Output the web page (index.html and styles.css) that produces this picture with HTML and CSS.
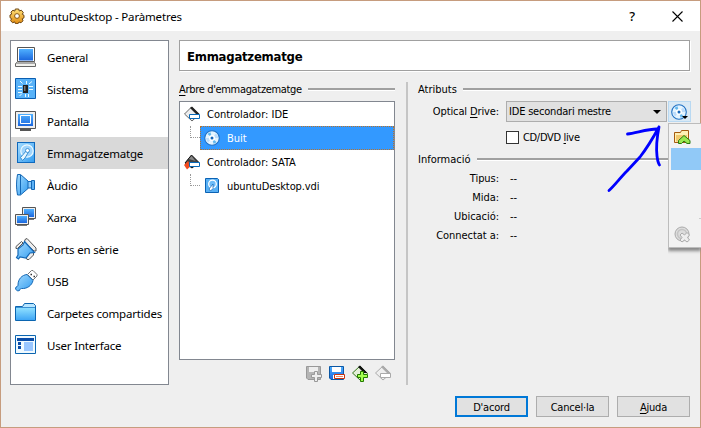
FILE: index.html
```html
<!DOCTYPE html>
<html lang="ca">
<head>
<meta charset="utf-8">
<title>ubuntuDesktop - Paràmetres</title>
<link rel="stylesheet" href="styles.css">
</head>
<body>
<svg class="defs" width="0" height="0" aria-hidden="true">
  <defs>
    <linearGradient id="blue" x1="0" y1="0" x2="0" y2="1"><stop offset="0" stop-color="#4fb0ff"/><stop offset="1" stop-color="#1b66dd"/></linearGradient>
    <linearGradient id="sky" x1="0" y1="0" x2="1" y2="1"><stop offset="0" stop-color="#a5dcff"/><stop offset="1" stop-color="#329cf0"/></linearGradient>
    <linearGradient id="folder" x1="0" y1="0" x2="0" y2="1"><stop offset="0" stop-color="#8fe0ff"/><stop offset="1" stop-color="#3fa6f5"/></linearGradient>
    <linearGradient id="gold" x1="0" y1="0" x2="0" y2="1"><stop offset="0" stop-color="#ffe27a"/><stop offset="1" stop-color="#e08a10"/></linearGradient>
    <symbol id="disc" viewBox="0 0 16 16">
      <circle cx="8" cy="8" r="7.300" fill="#e4f4ff" stroke="#1f70c4" stroke-width="1.100"/>
      <path d="M8 8 3.500 4A6 6 0 0 1 6.500 2.200ZM8 8l4.500 4A6 6 0 0 1 9.500 13.800Z" fill="#62b8ee"/>
      <path d="M8 8 2 8A6 6 0 0 0 4 12.500ZM8 8l6 0A6 6 0 0 0 12 3.500Z" fill="#bcdcfb"/>
      <circle cx="8" cy="8" r="3" fill="#fff"/><circle cx="8" cy="8" r="1.500" fill="#1667ba"/>
    </symbol>
    <symbol id="disk" viewBox="0 0 20 22">
      <rect x="1.500" y=".5" width="17" height="20" fill="url(#sky)" stroke="#0f69bd"/>
      <circle cx="11" cy="9" r="6.200" fill="#9fd4fc" stroke="#eefaff" stroke-width="1.200"/>
      <path d="m11 8-6.500 7.500 2 3L9 16l3.500-6Z" fill="#e7f7ff" stroke="#2a84cd" stroke-width=".9"/>
      <circle cx="11.500" cy="8.500" r="2" fill="#fff" stroke="#2a84cd" stroke-width=".8"/>
    </symbol>
  </defs>
</svg>
<div class="window">
  <header class="titlebar">
    <svg class="gear" width="16" height="16" viewBox="0 0 16 16"><path d="M6.300 1h3.400l.6 2 2-.8 2 2.300-1 1.800 1.700 1v2.500l-1.800 1 .8 2-2 2-2-.8-1 1.700H6.500l-.9-1.800-2 .9-2-2.100 1-2L1 9.700V7l1.700-.9-.8-2L4 2.200l1.800.9Z" fill="url(#gold)" stroke="#6b4310"/><circle cx="8" cy="8" r="2.400" fill="#fff" stroke="#875611"/></svg>
    <h1 class="title">ubuntuDesktop - Paràmetres</h1>
    <span class="help">?</span>
    <svg class="close" width="11" height="11" viewBox="0 0 11 11"><path d="m.5.5 10 10M10.500.5l-10 10" stroke="#000" stroke-width="1.100"/></svg>
  </header>
  <div class="content">
    <nav class="sidebar">
      <a class="item"><svg width="23" height="22" viewBox="0 0 23 22"><path d="M2.500 1.500h17v14h-17z" fill="#fff" stroke="#555"/><path d="M4 3h14v11.500H4z" fill="url(#blue)"/><path d="m2.500 16-2 1.500v3h20v-3l-2-1.500Z" fill="#f2f2ee" stroke="#666"/><path d="M1 17.500h19" stroke="#aaa"/></svg><span>General</span></a>
      <a class="item"><svg width="23" height="22" viewBox="0 0 23 22"><path d="M.5.5h20v20H.5z" fill="#58b2f8" stroke="#0b5eb1"/><path d="M8 7h5v8H8z" fill="#222"/><path d="M9 8h1.500v5H9z" fill="#777"/><path d="M3 8.500h4M3 11.500h4M3 14.500h4M14 8.500h4M14 11.500h4M11.500 3v3M5 3l2.500 2.500M17 3.500 14 6M4.500 18 7 15.500M10.500 16v3M13.500 16v3" stroke="#e9faff"/></svg><span>Sistema</span></a>
      <a class="item"><svg width="23" height="22" viewBox="0 0 23 22"><path d="M.5 1.500h20v17H.5z" fill="#eee" stroke="#555"/><path d="M3 4h15v12H3z" fill="url(#blue)"/><path d="M5.500 5.500h10v8h-10z" fill="none" stroke="#fff"/><path d="M5 19h11v2H5z" fill="#555"/></svg><span>Pantalla</span></a>
      <a class="item selected"><svg width="23" height="22"><use href="#disk" x="1" width="20" height="22"/></svg><span>Emmagatzematge</span></a>
      <a class="item"><svg width="23" height="22" viewBox="0 0 23 22"><path d="M11 7.500h6v6.500h-6z" fill="#8ccbfb" stroke="#1468b6"/><path d="M16.500 6.500h3v9h-3z" fill="#5db2f6" stroke="#1468b6"/><path d="M2.500.5h3L13 7v7.500l-7.500 6.500h-3C1.200 14 1.200 8 2.500.5Z" fill="url(#sky)" stroke="#1468b6"/><path d="M5.500 1v19.500" stroke="#1468b6"/></svg><span>Àudio</span></a>
      <a class="item"><svg width="23" height="22" viewBox="0 0 23 22"><path d="M7.500 1.500h13v11h-13z" fill="#eee" stroke="#555"/><path d="M9 3h10v8H9z" fill="url(#blue)"/><path d="M.5 8.500h13v10H.5z" fill="#eee" stroke="#555"/><path d="M2 10h10v7H2z" fill="url(#blue)"/><path d="M2 19.500h10M14 13.500h5" stroke="#777"/></svg><span>Xarxa</span></a>
      <a class="item"><svg width="23" height="22" viewBox="0 0 23 22"><path d="m10 1.500 2-1 9 9.500v3h-2L9.500 4ZM1 8.500 6.500 3.500 8 5l-5.500 5.500H1ZM11 19l5-5 2.500.5V17L14 21.500h-2Z" fill="#eee" stroke="#555"/><path d="m9.500 3.500 10 11-4.500.5-4 5-6-1-1.500 2-2-1.500L3 17 3 11l5-4Z" fill="url(#sky)" stroke="#1468b6" stroke-width="1.200"/></svg><span>Ports en sèrie</span></a>
      <a class="item"><svg width="23" height="22" viewBox="0 0 23 22"><path d="m12.500 4.500 4-4h1.500L22 4.500V6l-4 4Z" fill="#fff" stroke="#777"/><path d="M15.500 4.500H17M18.500 6.500H20" stroke="#333" stroke-width="1.500"/><path d="m12 4.500 6 6c-1 5-6 8.500-11.500 8-1 0-1.500.5-2 2l-2 .5L.5 19l.5-2c1.500-.5 2-1 2-2C3 9 7 5 12 4.500Z" fill="url(#sky)" stroke="#1468b6"/></svg><span>USB</span></a>
      <a class="item"><svg width="23" height="22" viewBox="0 0 23 22"><path d="M.5 4.500h7l2-3h9l2 2v15H.5Z" fill="#b8e6ff" stroke="#0b65b0"/><path d="M1 6h19v12H1z" fill="url(#folder)"/><path d="M1 5.500h19" stroke="#3b91d4"/></svg><span>Carpetes compartides</span></a>
      <a class="item"><svg width="23" height="22" viewBox="0 0 23 22"><path d="M.5 1.500h20v18H.5z" fill="#f0faff" stroke="#0b65b0"/><path d="M2 4h17v3H2zM3 8h3v3H3zM3 12h3v3H3z" fill="#0a4ca8"/><path d="M9 8h9v9H9z" fill="#99c6ff"/></svg><span>User Interface</span></a>
    </nav>
    <main class="page">
      <h2 class="heading"><span>Emmagatzematge</span></h2>
      <div class="columns">
        <section class="storage">
          <h3 class="legend"><span class="tight"><u>A</u>rbre d'emmagatzematge</span></h3>
          <div class="tree">
            <div class="row"><svg width="16" height="16" viewBox="0 0 16 16"><path d="M.5 8 7.500 1 15 8.500 8 15Z" fill="#eee" stroke="#666"/><path d="m6 2 2-1.500L15.500 8H12Z" fill="#222"/><path d="M5.500 8.500h10v4h-10z" fill="#fff" stroke="#0869b8"/></svg><span>Controlador: IDE</span></div>
            <div class="row child"><i class="branch"></i><div class="leaf active"><svg width="16" height="16"><use href="#disc"/></svg><span>Buit</span></div></div>
            <div class="row"><svg width="16" height="16" viewBox="0 0 16 16"><path d="M1 9 7.500 1 15 8.500 8 14Z" fill="#444" stroke="#111"/><path d="m5 5 2.500-3 4 5Z" fill="#888"/><path d="m0 11 4-4 3 5-4 3.500Z" fill="#f24c20"/><path d="M5.500 8.500h10v4h-10z" fill="#fff" stroke="#0869b8"/></svg><span>Controlador: SATA</span></div>
            <div class="row child"><i class="branch"></i><div class="leaf"><svg width="16" height="16" viewBox="0 0 16 16"><path d="M1.500.5h12l1 1v13h-13z" fill="#58b0f4" stroke="#0b62b4"/><circle cx="8.500" cy="6" r="3.800" fill="#6dbcf8" stroke="#fff" stroke-width="1.300"/><path d="m9 6-4 5 1.500 2L9 10.500Z" fill="#fff" stroke="#0b62b4" stroke-width=".7"/></svg><span class="vdi">ubuntuDesktop.vdi</span></div></div>
          </div>
          <div class="tools">
            <svg width="17" height="17" viewBox="0 0 17 17"><path d="M.5 1.500h14v13H2l-1.500-1.500Z" fill="#b4b4b4" stroke="#999"/><path d="M3 2h9v5H3z" fill="#eee"/><path d="M8.500 6.500h3v3h4v3h-4v4h-3v-4h-3v-3h3Z" fill="#eee" stroke="#999"/></svg>
            <svg width="17" height="17" viewBox="0 0 17 17"><path d="M.5 1.500h14v13H2l-1.500-1.500Z" fill="url(#blue)" stroke="#0b57a4"/><path d="M3 2h9v5H3zM4 10h3v4H4z" fill="#fff"/><path d="M5.500 9.500h10v4h-10z" fill="#fff" stroke="#c83210"/><path d="M7 11h7v1H7z" fill="#f08b68"/></svg>
            <svg width="17" height="17" viewBox="0 0 17 17"><path d="M.5 8 8 1l7.500 7.500L8 15Z" fill="#e4eed9" stroke="#347619"/><path d="m6 2 2-1.500L15.500 8H12Z" fill="#111"/><path d="M8.500 6.500h3v3h4v3h-4v4h-3v-4h-3v-3h3Z" fill="#a4ff50" stroke="#237900"/></svg>
            <svg width="17" height="17" viewBox="0 0 17 17"><path d="M.5 8 8 1l7.500 7.500L8 15Z" fill="#eee" stroke="#aaa"/><path d="m6 2 2-1.500L15.500 8H12Z" fill="#aaa"/><path d="M5.500 8.500h10v4h-10z" fill="#fff" stroke="#aaa"/></svg>
          </div>
        </section>
        <div class="divider"></div>
        <section class="details">
          <h3 class="legend"><span>Atributs</span></h3>
          <div class="form">
            <label class="optical">Optical <u>D</u>rive:</label>
            <div class="combo"><span>IDE secondari mestre</span><i class="caret"></i></div>
            <button class="disc-button"><svg width="16" height="16"><use href="#disc"/></svg><i class="caret small"></i></button>
            <label class="check"><i class="box"></i><span>CD/DVD <u>l</u>ive</span></label>
          </div>
          <h3 class="legend info"><span>Informació</span></h3>
          <dl class="facts">
            <dt>Tipus:</dt><dd>--</dd>
            <dt>Mida:</dt><dd>--</dd>
            <dt>Ubicació:</dt><dd>--</dd>
            <dt>Connectat a:</dt><dd>--</dd>
          </dl>
        </section>
      </div>
    </main>
  </div>
  <footer class="actions">
    <button class="btn primary">D'acord</button>
    <button class="btn">Cancel·la</button>
    <button class="btn"><u>A</u>juda</button>
  </footer>
</div>
<div class="menu">
  <div class="entry"><svg width="17" height="16" viewBox="0 0 17 16"><path d="M.5 3.500h6l1-2h7v12H.5Z" fill="#fff0b5" stroke="#a45a10"/><path d="M2 6h11v6.500H2z" fill="#f2c96e"/><path d="m4.500 11.500 5.500-5 6 5v3h-3l-3-2.500-2.500 2.500h-3Z" fill="#9be850" stroke="#277a10"/></svg></div>
  <div class="entry current"></div>
  <div class="entry"></div>
  <div class="entry"></div>
  <div class="rule"></div>
  <div class="entry"><svg width="17" height="17" viewBox="0 0 17 17"><circle cx="8" cy="8" r="7" fill="#ddd" stroke="#aaa"/><circle cx="8" cy="8" r="4.500" fill="none" stroke="#c4c4c4" stroke-width="1.500"/><path d="m6 9 2-2 2.500 2L13 6.500l2.500 2.500-2 2.500 2 2.500-2.500 2-2.500-2L8 16l-2-2 2-2.500Z" fill="#eee" stroke="#aaa"/></svg></div>
</div>
<svg class="arrow" width="62" height="72" viewBox="602 122 62 72"><path d="M609 190.500C615 185 620 178 627 171L640 157c7-9 13-19 19-30M627.500 134c8-1 21-5 29-5M659 127c-2 10-3 20-2 29 .5 4 1 7 2.500 9" fill="none" stroke="#00f" stroke-width="2.800" stroke-linecap="round" stroke-linejoin="round"/></svg>
</body>
</html>
```
FILE: styles.css
```css
* { box-sizing: border-box; }
body { margin: 0; width: 701px; height: 428px; overflow: hidden; position: relative; font: 11px/14px "DejaVu Sans Condensed", "DejaVu Sans", sans-serif; font-stretch: condensed; color: #000; }
h1, h2, h3, dl, dd { margin: 0; font-weight: normal; font-size: inherit; }
span, label, dt { white-space: nowrap; }
svg { display: block; flex: none; }
u { text-decoration-thickness: 1px; text-underline-offset: 2px; }
.defs { position: absolute; }
.window { width: 701px; height: 428px; border: 1px solid #c69c7e; background: #efefef; display: flex; flex-direction: column; }
.titlebar { height: 30px; background: #fff; display: flex; align-items: center; padding: 0 17px 0 8px; }
.title { font: 11.5px/16px "Noto Sans", sans-serif; letter-spacing: -.17px; margin-left: 5px; padding-top: 1px; flex: 1; }
.gear { margin-top: -1px; }
.help { font: 500 13px/16px "Noto Sans", sans-serif; margin-right: 37px; }
.content { display: flex; height: 345px; margin: 9px 9px 0; gap: 10px; }
.sidebar { width: 159px; height: 345px; border: 1px solid #828790; background: #fff; }
.item { display: flex; align-items: center; height: 32px; padding-left: 4px; font: 11.5px/16px "Noto Sans", sans-serif; letter-spacing: -.19px; }
.item span { margin-left: 9px; padding-top: 2px; }
.selected { background: #d9d9d9; }
.page { flex: 1; min-width: 0; }
.heading { height: 31px; width: 511px; border: 1px solid #a0a0a0; box-shadow: 1px 1px #fff; background: #fff; display: flex; align-items: center; padding: 2px 0 0 7px; font: bold 13px/16px "DejaVu Sans Condensed", sans-serif; letter-spacing: -.25px; }
.columns { display: flex; padding-top: 11px; }
.storage { width: 216px; }
.legend { display: flex; align-items: center; height: 14px; gap: 6px; }
.legend span { padding-top: 2px; }
.legend .tight { letter-spacing: -.33px; }
.legend::after { content: ""; flex: 1; height: 2px; background: #a0a0a0; border-bottom: 1px solid #fff; }
.tree { height: 259px; margin-top: 5px; border: 1px solid #828790; background: #fff; }
.row { display: flex; align-items: center; height: 24px; padding-left: 4px; }
.row span { margin-left: 7px; padding-top: 2px; }
.row .vdi { letter-spacing: -.1px; }
.child { padding-left: 10px; }
.branch { width: 10px; height: 12px; align-self: flex-start; border: dotted #999; border-width: 0 0 1px 1px; }
.leaf { flex: 1; display: flex; align-items: center; height: 24px; padding-left: 4px; }
.active { background: #3399ff; color: #fff; outline: 1px dotted #b8722c; outline-offset: -1px; }
.tools { display: flex; justify-content: flex-end; gap: 6px; padding: 5px 3px 0 0; }
.divider { width: 2px; height: 303px; background: #c5c5c5; margin: 0 10px 0 11px; }
.details { width: 273px; }
.form { display: grid; grid-template-columns: 81px 161px 23px; column-gap: 7px; row-gap: 8px; padding-top: 5px; align-items: center; }
.form > .combo + .disc-button { margin-left: -6px; }
.optical { justify-self: end; letter-spacing: -.12px; padding-top: 1px; }
.combo { height: 21px; border: 1px solid #adadad; background: #e1e1e1; display: flex; align-items: center; justify-content: space-between; padding: 0 5px 0 2px; letter-spacing: -.2px; }
.combo span { padding-top: 1px; }
.caret { border: solid transparent; border-width: 4px 4px 0; border-top-color: #000; }
.disc-button { width: 23px; height: 21px; padding: 0 0 0 2px; border: 1px solid #b9d9f2; background: #d9e9f5; display: flex; align-items: center; position: relative; }
.small { position: absolute; right: 2px; bottom: 2px; border-width: 3px 3px 0; }
.check { grid-column: 2; display: flex; align-items: center; gap: 4px; height: 14px; letter-spacing: -.33px; }
.check span { padding-top: 2px; }
.box { width: 13px; height: 13px; border: 1px solid #333; background: #fff; }
.info { margin-top: 8px; }
.facts { display: grid; grid-template-columns: 81px auto; column-gap: 11px; grid-auto-rows: 19px; line-height: 19px; padding-top: 3px; }
.facts dt { justify-self: end; letter-spacing: -.05px; }
.actions { display: flex; justify-content: flex-end; gap: 8px; padding: 11px 10px 0; }
.btn { width: 73px; height: 21px; padding: 2px 0 0; border: 1px solid #adadad; background: #e1e1e1; font: inherit; letter-spacing: -.2px; color: #000; }
.primary { border: 2px solid #0078d7; }
.menu { position: absolute; left: 668px; top: 123px; width: 33px; height: 125px; border: 1px solid #bcbcbc; border-right: 0; background: #f2f2f2; padding: 2px 0 2px 2px; box-shadow: 0 3px 3px #888; clip-path: inset(0 0 -8px 0); }
.entry { height: 22px; padding-left: 3px; display: flex; align-items: center; }
.current { background: #91c9f7; }
.rule { height: 1px; margin: 4px 0 4px 28px; background: #ccc; }
.arrow { position: absolute; left: 602px; top: 122px; }
```
